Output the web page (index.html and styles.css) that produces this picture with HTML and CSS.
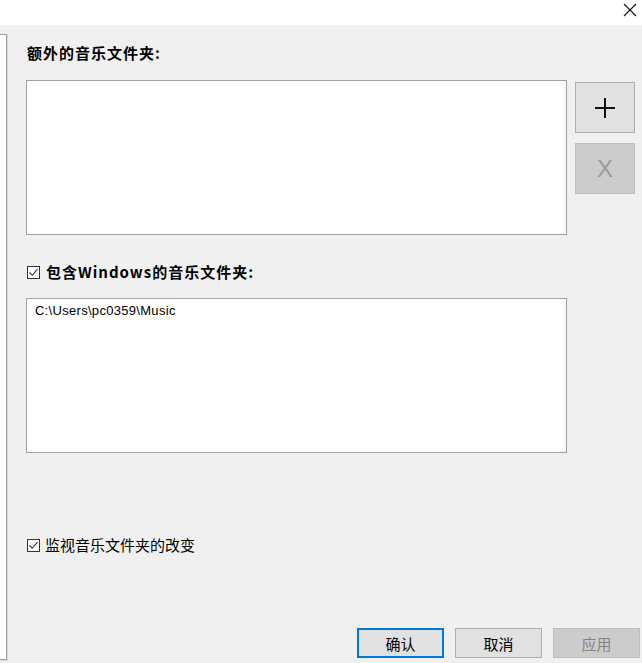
FILE: index.html
```html
<!DOCTYPE html>
<html lang="zh">
<head>
<meta charset="utf-8">
<link rel="stylesheet" href="styles.css">
</head>
<body>
<div class="titlebar">
  <svg class="close" width="14" height="14" viewBox="0 0 14 14"><path d="M1 1 L13 13 M13 1 L1 13" stroke="#111" stroke-width="1.1" fill="none"/></svg>
</div>
<div class="main">
  <div class="sidepanel"></div>
  <div class="content">
    <div class="label bold">额外的音乐文件夹:</div>
    <div class="row1">
      <div class="listbox"></div>
      <div class="sidebtns">
        <div class="btn sq">
          <svg width="22" height="22" viewBox="0 0 22 22"><path d="M11 1 V21 M1 11 H21" stroke="#111" stroke-width="2" fill="none"/></svg>
        </div>
        <div class="btn sq disabled"><span class="xglyph">X</span></div>
      </div>
    </div>
    <label class="check bold check2"><span class="box"><svg width="11" height="11" viewBox="0 0 11 11"><path d="M1.5 5.5 L4.3 8.3 L9.5 2.2" stroke="#333" stroke-width="1.1" fill="none"/></svg></span>包含Windows的音乐文件夹:</label>
    <div class="listbox list2"><div class="item">C:\Users\pc0359\Music</div></div>
    <label class="check check3"><span class="box"><svg width="11" height="11" viewBox="0 0 11 11"><path d="M1.5 5.5 L4.3 8.3 L9.5 2.2" stroke="#333" stroke-width="1.1" fill="none"/></svg></span>监视音乐文件夹的改变</label>
    <div class="footer">
      <div class="btn wide default">确认</div>
      <div class="btn wide">取消</div>
      <div class="btn wide disabled">应用</div>
    </div>
  </div>
</div>
</body>
</html>
```
FILE: styles.css
```css
html, body {
  margin: 0;
  padding: 0;
}
body {
  width: 642px;
  height: 663px;
  background: #f0f0f0;
  font-family: "Noto Sans CJK SC", "Noto Sans", sans-serif;
  font-size: 15px;
  color: #000;
  overflow: hidden;
}
.titlebar {
  height: 25px;
  background: #fff;
  display: flex;
  justify-content: flex-end;
  align-items: flex-start;
}
.close {
  margin-top: 3px;
  margin-right: 5px;
}
.main {
  display: flex;
  padding-top: 9px;
}
.sidepanel {
  width: 6px;
  height: 624px;
  background: #fff;
  border: 1px solid #a0a0a0;
  border-left: none;
  box-shadow: 1px 1px 0 #d8d8d8;
}
.content {
  flex: 1;
  padding-left: 19px;
  display: flex;
  flex-direction: column;
}
.bold {
  font-weight: bold;
  letter-spacing: 1px;
}
.label {
  line-height: 20px;
  height: 20px;
  margin-top: 9px;
  padding-left: 1px;
}
.row1 {
  display: flex;
  margin-top: 17px;
}
.listbox {
  width: 539px;
  height: 153px;
  background: #fff;
  border: 1px solid #a0a0a0;
  box-shadow: inset -3px 0 0 #f5f8fc;
}
.sidebtns {
  margin-left: 8px;
  margin-top: 2px;
  display: flex;
  flex-direction: column;
  gap: 10px;
}
.btn {
  box-sizing: border-box;
  background: #e1e1e1;
  border: 1px solid #adadad;
  display: flex;
  align-items: center;
  justify-content: center;
}
.btn.disabled {
  background: #cccccc;
  border-color: #bfbfbf;
  color: #838383;
}
.sq {
  width: 60px;
  height: 51px;
}
.xglyph {
  font-family: "Liberation Sans", sans-serif;
  font-size: 24px;
  color: #9a9a9a;
  line-height: 1;
}
.check {
  display: flex;
  align-items: center;
  line-height: 20px;
  height: 20px;
  padding-left: 1px;
}
.box {
  box-sizing: border-box;
  width: 13px;
  height: 13px;
  border: 1px solid #333;
  background: #fff;
  display: flex;
  align-items: center;
  justify-content: center;
  margin-right: 6px;
  letter-spacing: 0;
}
.check3 .box {
  margin-right: 5px;
}
.check2 {
  margin-top: 27px;
}
.list2 {
  margin-top: 16px;
}
.item {
  font-family: "Liberation Sans", sans-serif;
  font-size: 13px;
  letter-spacing: 0.3px;
  line-height: 14px;
  padding: 5px 0 0 8px;
}
.check3 {
  margin-top: 82px;
}
.footer {
  margin-top: 73px;
  display: flex;
  justify-content: flex-end;
  gap: 11px;
  padding-right: 2px;
}
.wide {
  width: 87px;
  height: 30px;
  font-size: 15px;
}
.default {
  border: 2px solid #0078d7;
}
```
